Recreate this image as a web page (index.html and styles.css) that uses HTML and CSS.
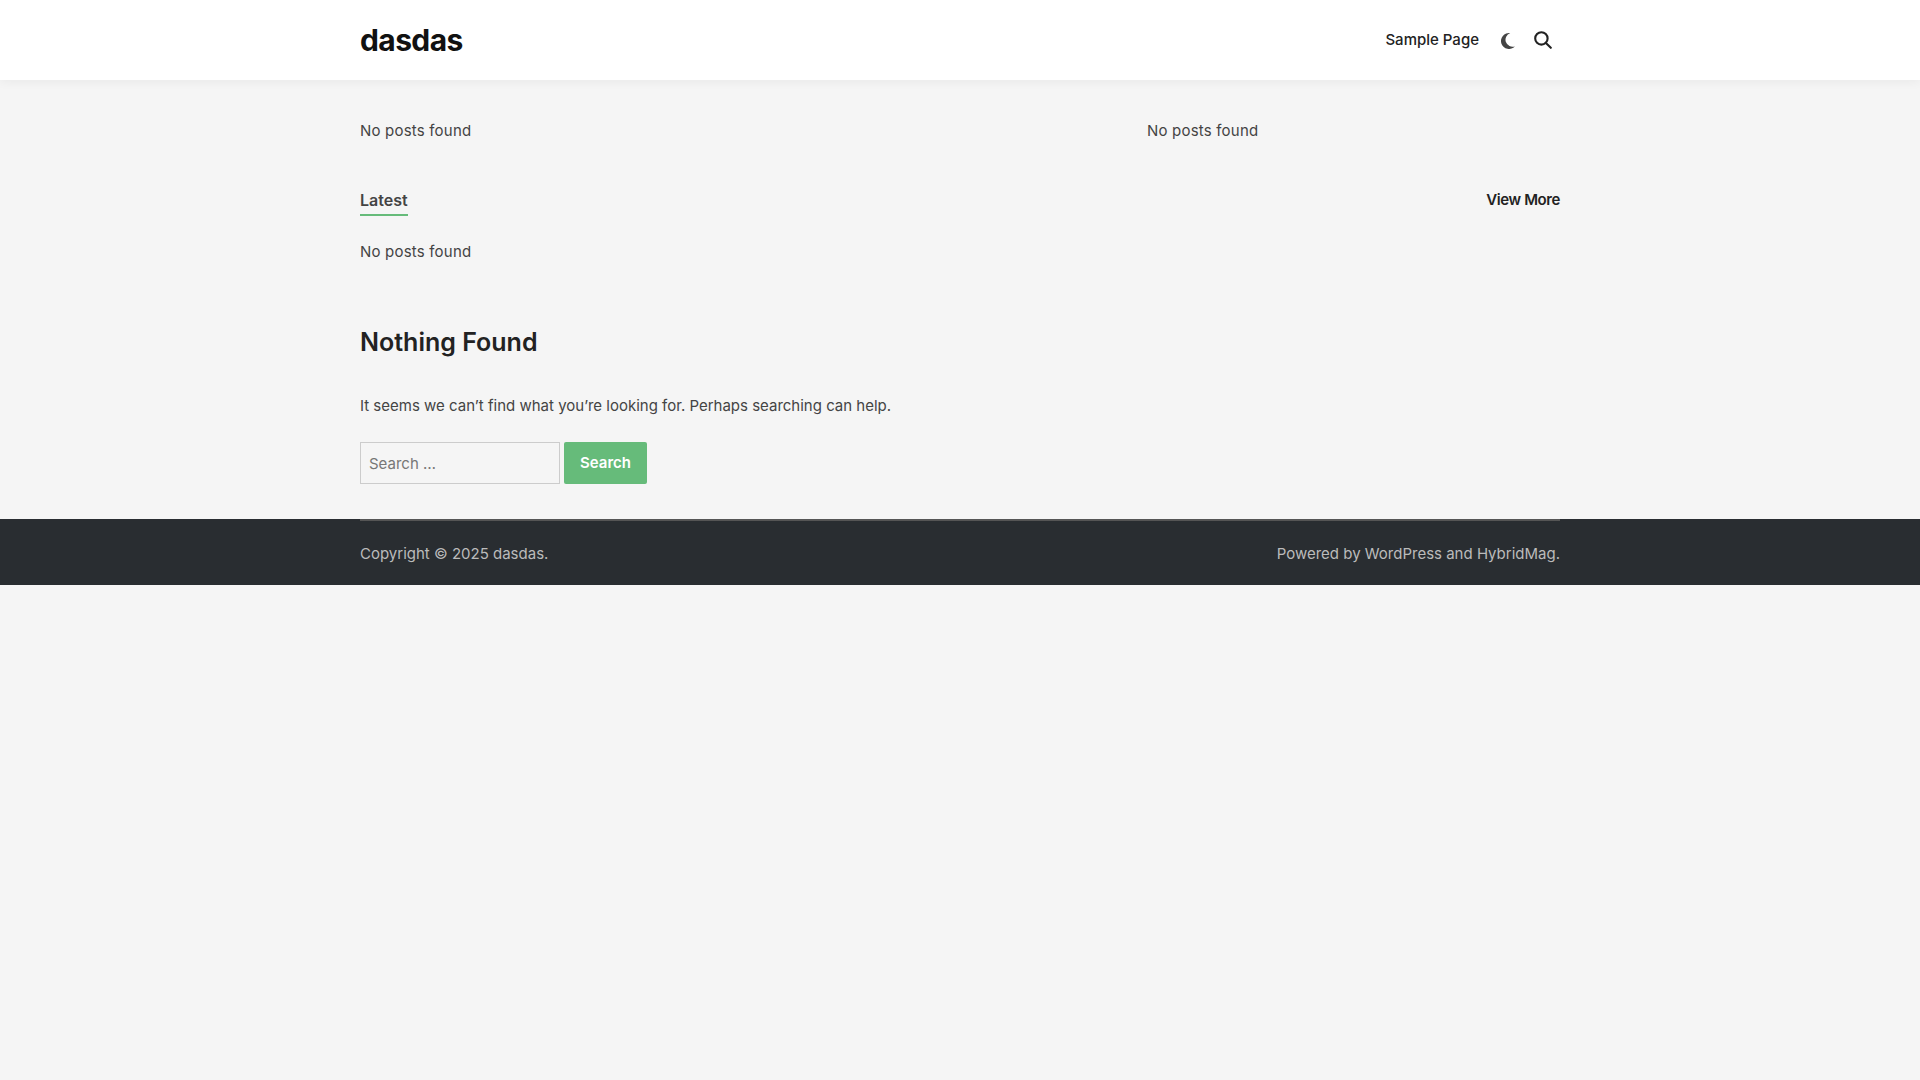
FILE: index.html
```html
<!DOCTYPE html>
<html lang="en">
<head>
    <meta charset="UTF-8">
    <meta name="viewport" content="width=device-width, initial-scale=1.0">
    <title>dasdas</title>
    <link rel="stylesheet" href="styles.css">
</head>
<body>

    <!-- Site header -->
    <header class="site-header">
        <div class="container header-row">
            <a class="site-title" href="#">dasdas</a>
            <nav class="header-nav">
                <a class="nav-link" href="#">Sample Page</a>
                <button class="icon-btn moon-btn" aria-label="Dark mode">
                    <svg width="14" height="16" viewBox="0 0 14 16"><path fill="#444" d="M9.2 0.1A8 8 0 1 0 13.9 13.4 A6.8 6.8 0 0 1 9.2 0.1Z"/></svg>
                </button>
                <button class="icon-btn search-btn" aria-label="Search">
                    <svg width="18" height="18" viewBox="0 0 18 18" fill="none" stroke="#222" stroke-width="2.1"><circle cx="7.4" cy="7.4" r="6.2"/><path stroke-linecap="round" d="M11.9 11.9 16.8 16.8"/></svg>
                </button>
            </nav>
        </div>
    </header>

    <main class="container">
        <div class="top-posts">
            <p class="no-posts">No posts found</p>
            <p class="no-posts">No posts found</p>
        </div>

        <div class="section-head">
            <h2 class="section-title">Latest</h2>
            <a class="view-more" href="#">View More</a>
        </div>
        <p class="no-posts">No posts found</p>

        <section class="nothing-found">
            <h1>Nothing Found</h1>
            <p>It seems we can’t find what you’re looking for. Perhaps searching can help.</p>
            <form class="search-form">
                <input class="search-field" type="search" placeholder="Search …">
                <button class="search-submit" type="button">Search</button>
            </form>
        </section>
    </main>

    <footer class="site-footer">
        <div class="container footer-row">
            <span>Copyright © 2025 <a href="#">dasdas</a>.</span>
            <span>Powered by <a href="#">WordPress</a> and <a href="#">HybridMag</a>.</span>
        </div>
    </footer>

</body>
</html>
```

FILE: styles.css
```css
/* General styles */
body {
    font-family: 'Inter', 'Liberation Sans', sans-serif;
    font-size: 15px;
    line-height: 24px;
    margin: 0;
    background-color: #f5f5f5;
    color: #444;
}

a {
    color: inherit;
    text-decoration: none;
}

p {
    margin: 0;
}

.container {
    width: 1200px;
    margin: 0 auto;
}

/* Header */
.site-header {
    background-color: #fff;
    box-shadow: 0 2px 10px rgba(0, 0, 0, 0.05);
}

.header-row {
    display: flex;
    justify-content: space-between;
    align-items: center;
    height: 80px;
}

.site-title {
    font-size: 30px;
    font-weight: 700;
    letter-spacing: -0.6px;
    color: #111;
}

.header-nav {
    display: flex;
    align-items: center;
}

.nav-link {
    font-weight: 500;
    color: #222;
}

.icon-btn {
    display: flex;
    padding: 0;
    border: none;
    background: none;
}

.moon-btn {
    margin-left: 22px;
    margin-top: 1px;
}

.search-btn {
    margin-left: 19px;
    margin-right: 8px;
    margin-bottom: 1px;
}

/* Posts */
.no-posts {
    letter-spacing: 0.2px;
}

.top-posts {
    display: grid;
    grid-template-columns: 787px 1fr;
    padding-top: 39px;
}

.section-head {
    display: flex;
    justify-content: space-between;
    align-items: flex-start;
    margin-top: 45px;
}

.section-title {
    margin: 0;
    font-size: 16px;
    font-weight: 600;
    line-height: 24px;
    padding-bottom: 2px;
    border-bottom: 2px solid #66bb7a;
}

.view-more {
    font-weight: 600;
    letter-spacing: -0.4px;
    color: #222;
}

.section-head + .no-posts {
    margin-top: 24px;
}

/* Nothing found */
.nothing-found {
    margin-top: 60px;
    padding-bottom: 35px;
}

.nothing-found h1 {
    margin: 0 0 34px;
    font-size: 25px;
    font-weight: 600;
    line-height: 36px;
    color: #222;
}

.search-form {
    display: flex;
    gap: 4px;
    margin-top: 24px;
}

.search-field {
    width: 200px;
    height: 42px;
    box-sizing: border-box;
    padding: 0 8px;
    border: 1px solid #ccc;
    background: none;
    font: inherit;
    color: #444;
}

.search-field::placeholder {
    color: #777;
}

.search-submit {
    width: 83px;
    height: 42px;
    padding: 0;
    border: none;
    border-radius: 2px;
    background-color: #66bb7a;
    color: #fff;
    font: inherit;
    font-weight: 600;
}

/* Footer */
.site-footer {
    background-color: #292d31;
    color: #bbb;
}

.footer-row {
    display: flex;
    justify-content: space-between;
    align-items: center;
    height: 63px;
    padding-top: 1px;
    border-top: 2px solid #555;
    box-sizing: content-box;
}
```
